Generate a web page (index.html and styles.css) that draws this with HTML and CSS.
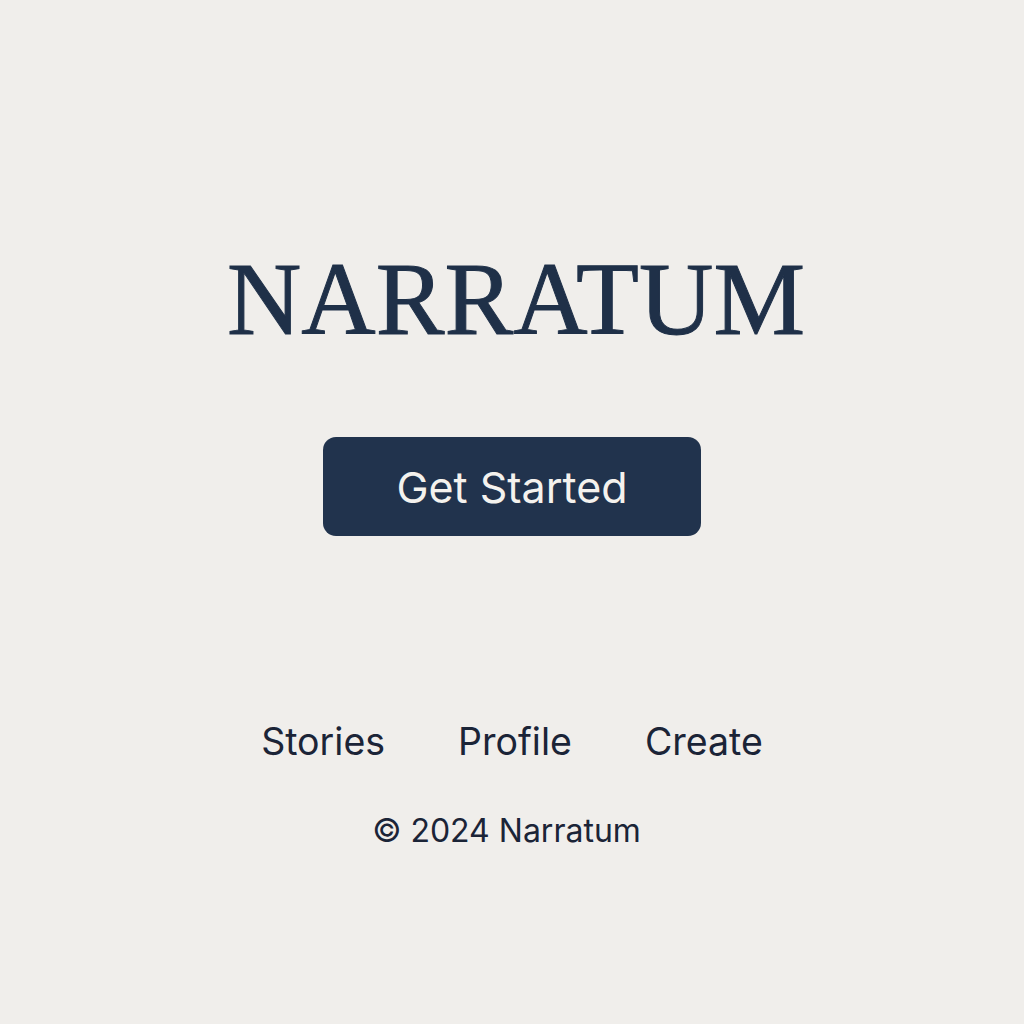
FILE: index.html
```html
<!DOCTYPE html>
<html lang="en">
<head>
<meta charset="utf-8">
<title>Narratum</title>
<link rel="stylesheet" href="styles.css">
</head>
<body>
<main class="page">
  <h1 class="brand">NARRATUM</h1>
  <a class="cta" href="#">Get Started</a>
  <nav class="nav">
    <a href="#">Stories</a>
    <a href="#">Profile</a>
    <a href="#">Create</a>
  </nav>
  <footer class="copy">© 2024 Narratum</footer>
</main>
</body>
</html>
```
FILE: styles.css
```css
html, body {
  margin: 0;
  padding: 0;
  background: #f0eeeb;
}
.page {
  width: 1024px;
  height: 1024px;
  display: flex;
  flex-direction: column;
  align-items: center;
  padding-top: 248px;
  box-sizing: border-box;
  font-family: Inter, "Liberation Sans", sans-serif;
}
.brand {
  margin: 0;
  font-family: "Liberation Serif", serif;
  font-weight: 400;
  font-size: 103px;
  line-height: 103px;
  color: #1f3048;
  letter-spacing: 0;
  -webkit-text-stroke: 1px #1f3048;
  padding-left: 8px;
}
.cta {
  margin-top: 86px;
  width: 378px;
  height: 99px;
  box-sizing: border-box;
  display: flex;
  align-items: center;
  justify-content: center;
  background: #21334d;
  border-radius: 13px;
  color: #f4f2ee;
  font-size: 43px;
  text-decoration: none;
}
.nav {
  margin-top: 184px;
  display: flex;
  gap: 73px;
  line-height: 44px;
}
.nav a {
  font-size: 37.5px;
  color: #1b2437;
  text-decoration: none;
}
.copy {
  margin-top: 47px;
  margin-right: 11px;
  font-size: 32px;
  line-height: 40px;
  color: #1b2437;
}
```
